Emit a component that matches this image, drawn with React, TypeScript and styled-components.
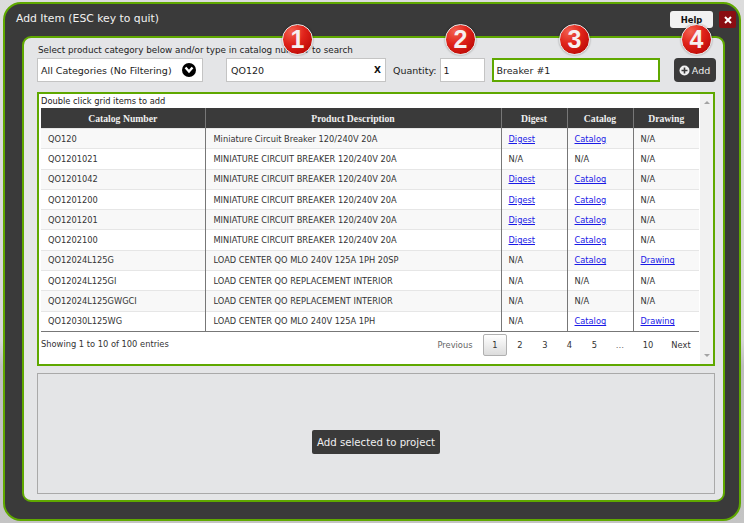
import React from 'react';
import styled, { createGlobalStyle } from 'styled-components';

const GlobalStyle = createGlobalStyle`
    html, body {
        margin: 0;
        padding: 0;
        height: 523px;
        overflow: hidden;
        background: #cfcfcf;
        font-family: "DejaVu Sans", Verdana, sans-serif;
        color: #333;
    }
`;

const Page = styled.div`
    width: 744px;
    height: 523px;
    box-sizing: border-box;
    padding: 2px 3px 2px 3px;
    background: linear-gradient(#dcdcdc 0%, #d6d6d6 65%, #bdbdbd 70%, #c4c4c4 100%);
`;

const Dialog = styled.div`
    position: relative;
    box-sizing: border-box;
    height: 519px;
    background: #3a3a3a;
    border: 2px solid #5fa800;
    border-radius: 18px;
    padding: 0 14px 17px 17px;
    display: flex;
    flex-direction: column;
`;

const TitleBar = styled.div`
    height: 32px;
    margin-right: -14px;
    display: flex;
    align-items: flex-start;
`;

const Title = styled.div`
    color: #f2f2f2;
    font-size: 10.8px;
    line-height: 14px;
    margin: 8px 0 0 -6px;
    flex: 1;
`;

const HelpButton = styled.button`
    width: 43px;
    height: 17px;
    margin: 7px 6px 0 0;
    padding: 0;
    border: 0;
    border-radius: 3px;
    background: #f1f1f1;
    color: #111;
    font: bold 8.4px "DejaVu Sans", sans-serif;
`;

const CloseButton = styled.button`
    width: 17px;
    height: 17px;
    margin: 7px 3px 0 0;
    padding: 0;
    border: 0;
    border-radius: 2px;
    background: #8a0d12;
    color: #fff;
    display: flex;
    align-items: center;
    justify-content: center;
`;

const Panel = styled.div`
    flex: 1;
    box-sizing: border-box;
    background: #e4e5e7;
    border: 2px solid #5fa800;
    border-radius: 9px;
    padding: 6px 8px 6px 13px;
    display: flex;
    flex-direction: column;
`;

const Hint = styled.div`
    font-size: 8.8px;
    line-height: 12px;
    color: #222;
    margin-left: 1px;
`;

const SearchRow = styled.div`
    display: flex;
    align-items: center;
    height: 24px;
    margin-top: 2px;
`;

const Field = styled.div<{ $w: number; $green?: boolean; $ml?: number; $pl?: number }>`
    box-sizing: border-box;
    flex: none;
    width: ${p => p.$w}px;
    height: 24px;
    margin-left: ${p => p.$ml ?? 0}px;
    background: #fff;
    border: ${p => (p.$green ? '2px solid #5fa800' : '1px solid #c4c4c4')};
    display: flex;
    align-items: center;
    font-size: 9.5px;
    color: #222;
    padding: 0 3px 0 ${p => p.$pl ?? 3}px;
`;

const FieldText = styled.span`
    flex: 1;
`;

const SelectIcon = styled.span`
    width: 14px;
    height: 14px;
    border-radius: 50%;
    background: #000;
    display: flex;
    align-items: center;
    justify-content: center;
    margin-right: 3px;
`;

const ClearMark = styled.span`
    font-size: 9px;
    font-weight: bold;
    color: #111;
    margin-right: 1px;
`;

const QuantityLabel = styled.span`
    flex: none;
    font-size: 9.5px;
    color: #222;
    margin: 0 3px 0 7px;
`;

const AddButton = styled.button`
    flex: none;
    width: 42px;
    height: 24px;
    margin-left: 14px;
    padding: 0;
    border: 0;
    border-radius: 4px;
    background: #3a3a3a;
    color: #eee;
    font: 9.5px "DejaVu Sans", sans-serif;
    display: flex;
    align-items: center;
    justify-content: center;
    gap: 2px;
`;

const GridPanel = styled.div`
    box-sizing: border-box;
    height: 274px;
    margin-top: 10px;
    background: #fff;
    border: 2px solid #5fa800;
    display: flex;
`;

const GridBody = styled.div`
    width: 660px;
    padding-left: 2px;
    box-sizing: border-box;
`;

const GridHint = styled.div`
    font-size: 8.3px;
    line-height: 12px;
    height: 14px;
    padding-top: 1px;
    box-sizing: border-box;
    color: #222;
`;

const Table = styled.table`
    width: 658px;
    border-collapse: collapse;
    table-layout: fixed;
    border-bottom: 1px solid #777;
`;

const HeadCell = styled.th`
    height: 20px;
    padding: 0;
    background: #3a3a3a;
    color: #f0f0f0;
    font: bold 9.7px "Liberation Serif", serif;
    text-align: center;
    border-left: 1px solid #777;
    &:first-child {
        border-left: 0;
    }
`;

const Row = styled.tr`
    &:nth-child(odd) {
        background: #f8f8f8;
    }
`;

const Cell = styled.td`
    height: 19.3px;
    padding: 0 0 0 7px;
    font-size: 8.25px;
    color: #333;
    border-left: 1px solid #777;
    border-top: 1px solid #e6e6e6;
    white-space: nowrap;
    overflow: hidden;
    &:first-child {
        border-left: 0;
    }
    &:nth-child(2) {
        padding-left: 8px;
    }
`;

const Link = styled.a`
    color: #1a1ae6;
    text-decoration: underline;
`;

const Footer = styled.div`
    display: flex;
    align-items: flex-start;
    justify-content: space-between;
    width: 658px;
`;

const Info = styled.div`
    font-size: 8.3px;
    line-height: 12px;
    margin-top: 6px;
    color: #333;
`;

const Pager = styled.div`
    display: flex;
    align-items: center;
    height: 22px;
    margin-top: 2px;
`;

const PageItem = styled.span<{ $w: number; $active?: boolean; $muted?: boolean }>`
    box-sizing: border-box;
    width: ${p => p.$w}px;
    height: 22px;
    display: flex;
    align-items: center;
    justify-content: center;
    font-size: 8.3px;
    color: ${p => (p.$muted ? '#666' : '#333')};
    border-radius: 2px;
    ${p =>
        p.$active &&
        `
        margin-left: 10px;
        border: 1px solid #b0b0b0;
        background: linear-gradient(#ffffff, #dcdcdc);
    `}
`;

const Scrollbar = styled.div`
    width: 14px;
    margin-left: 1px;
    background: #f1f1f1;
    display: flex;
    flex-direction: column;
    justify-content: space-between;
    align-items: center;
    padding: 7px 0;
    box-sizing: border-box;
    height: 100%;
`;

const ScrollArrow = styled.span<{ $down?: boolean }>`
    width: 0;
    height: 0;
    border-left: 3px solid transparent;
    border-right: 3px solid transparent;
    ${p => (p.$down ? 'border-top: 3px solid #a3a3a3;' : 'border-bottom: 3px solid #a3a3a3;')}
`;

const BottomPanel = styled.div`
    flex: 1;
    margin-top: 7px;
    background: #e4e5e7;
    border: 1px solid #a9a9a9;
    display: flex;
    align-items: center;
    justify-content: center;
`;

const SubmitButton = styled.button`
    width: 128px;
    height: 24px;
    margin-top: 17px;
    padding: 0;
    border: 0;
    border-radius: 2px;
    background: #3a3a3a;
    color: #f0f0f0;
    font: 10.2px "DejaVu Sans", sans-serif;
`;

const BadgeDisc = styled.div<{ $x: number }>`
    position: absolute;
    left: ${p => p.$x}px;
    top: 20px;
    width: 31px;
    height: 31px;
    box-sizing: border-box;
    border-radius: 50%;
    border: 1px solid #e4e4e4;
    background: radial-gradient(circle at 30% 22%, #f2604f 0%, #e0231a 42%, #c40f0a 75%, #b00c08 100%);
    color: #f6f0f0;
    display: flex;
    align-items: center;
    justify-content: center;
    font: bold 25px "Liberation Sans", sans-serif;
    box-shadow: 0 0 2px rgba(0, 0, 0, 0.4);
`;

const rows = [
    ['QO120', 'Miniature Circuit Breaker 120/240V 20A', 'Digest', 'Catalog', ''],
    ['QO1201021', 'MINIATURE CIRCUIT BREAKER 120/240V 20A', '', '', ''],
    ['QO1201042', 'MINIATURE CIRCUIT BREAKER 120/240V 20A', 'Digest', 'Catalog', ''],
    ['QO1201200', 'MINIATURE CIRCUIT BREAKER 120/240V 20A', 'Digest', 'Catalog', ''],
    ['QO1201201', 'MINIATURE CIRCUIT BREAKER 120/240V 20A', 'Digest', 'Catalog', ''],
    ['QO1202100', 'MINIATURE CIRCUIT BREAKER 120/240V 20A', 'Digest', 'Catalog', ''],
    ['QO12024L125G', 'LOAD CENTER QO MLO 240V 125A 1PH 20SP', '', 'Catalog', 'Drawing'],
    ['QO12024L125GI', 'LOAD CENTER QO REPLACEMENT INTERIOR', '', '', ''],
    ['QO12024L125GWGCI', 'LOAD CENTER QO REPLACEMENT INTERIOR', '', '', ''],
    ['QO12030L125WG', 'LOAD CENTER QO MLO 240V 125A 1PH', '', 'Catalog', 'Drawing'],
];

const pages = [
    { label: 'Previous', w: 36, muted: true },
    { label: '1', w: 24, active: true },
    { label: '2', w: 26 },
    { label: '3', w: 24 },
    { label: '4', w: 25 },
    { label: '5', w: 25 },
    { label: '…', w: 26, muted: true },
    { label: '10', w: 30 },
    { label: 'Next', w: 36 },
];

const LinkCell = ({ text }: { text: string }) => (
    <Cell>{text ? <Link href="#">{text}</Link> : 'N/A'}</Cell>
);

const App: React.FC = () => {
    return (
        <Page>
            <GlobalStyle />
            <Dialog>
                <TitleBar>
                    <Title>Add Item (ESC key to quit)</Title>
                    <HelpButton>Help</HelpButton>
                    <CloseButton>
                        <svg width="8" height="8" viewBox="0 0 8 8">
                            <path d="M1 1L7 7M7 1L1 7" stroke="#fff" strokeWidth="2" />
                        </svg>
                    </CloseButton>
                </TitleBar>
                <Panel>
                    <Hint>Select product category below and/or type in catalog number to search</Hint>
                    <SearchRow>
                        <Field $w={166}>
                            <FieldText>All Categories (No Filtering)</FieldText>
                            <SelectIcon>
                                <svg width="10" height="8" viewBox="0 0 10 8">
                                    <path d="M1.5 1.5L5 5.5L8.5 1.5" fill="none" stroke="#fff" strokeWidth="2.4" />
                                </svg>
                            </SelectIcon>
                        </Field>
                        <Field $w={160} $ml={23} $pl={4}>
                            <FieldText>QO120</FieldText>
                            <ClearMark>X</ClearMark>
                        </Field>
                        <QuantityLabel>Quantity:</QuantityLabel>
                        <Field $w={45}>1</Field>
                        <Field $w={168} $green $ml={7}>Breaker #1</Field>
                        <AddButton>
                            <svg width="11" height="11" viewBox="0 0 11 11">
                                <circle cx="5.5" cy="5.5" r="5" fill="#f0f0f0" />
                                <path d="M5.5 2.5V8.5M2.5 5.5H8.5" stroke="#3a3a3a" strokeWidth="1.6" />
                            </svg>
                            Add
                        </AddButton>
                    </SearchRow>
                    <GridPanel>
                        <GridBody>
                            <GridHint>Double click grid items to add</GridHint>
                            <Table>
                                <colgroup>
                                    <col width="164" />
                                    <col width="296" />
                                    <col width="66" />
                                    <col width="66" />
                                    <col width="66" />
                                </colgroup>
                                <thead>
                                    <tr>
                                        <HeadCell>Catalog Number</HeadCell>
                                        <HeadCell>Product Description</HeadCell>
                                        <HeadCell>Digest</HeadCell>
                                        <HeadCell>Catalog</HeadCell>
                                        <HeadCell>Drawing</HeadCell>
                                    </tr>
                                </thead>
                                <tbody>
                                    {rows.map(r => (
                                        <Row key={r[0]}>
                                            <Cell>{r[0]}</Cell>
                                            <Cell>{r[1]}</Cell>
                                            <LinkCell text={r[2]} />
                                            <LinkCell text={r[3]} />
                                            <LinkCell text={r[4]} />
                                        </Row>
                                    ))}
                                </tbody>
                            </Table>
                            <Footer>
                                <Info>Showing 1 to 10 of 100 entries</Info>
                                <Pager>
                                    {pages.map(p => (
                                        <PageItem key={p.label} $w={p.w} $active={p.active} $muted={p.muted}>
                                            {p.label}
                                        </PageItem>
                                    ))}
                                </Pager>
                            </Footer>
                        </GridBody>
                        <Scrollbar>
                            <ScrollArrow />
                            <ScrollArrow $down />
                        </Scrollbar>
                    </GridPanel>
                    <BottomPanel>
                        <SubmitButton>Add selected to project</SubmitButton>
                    </BottomPanel>
                </Panel>
                <BadgeDisc $x={277}>1</BadgeDisc>
                <BadgeDisc $x={440}>2</BadgeDisc>
                <BadgeDisc $x={554}>3</BadgeDisc>
                <BadgeDisc $x={676}>4</BadgeDisc>
            </Dialog>
        </Page>
    );
};

export default App;
